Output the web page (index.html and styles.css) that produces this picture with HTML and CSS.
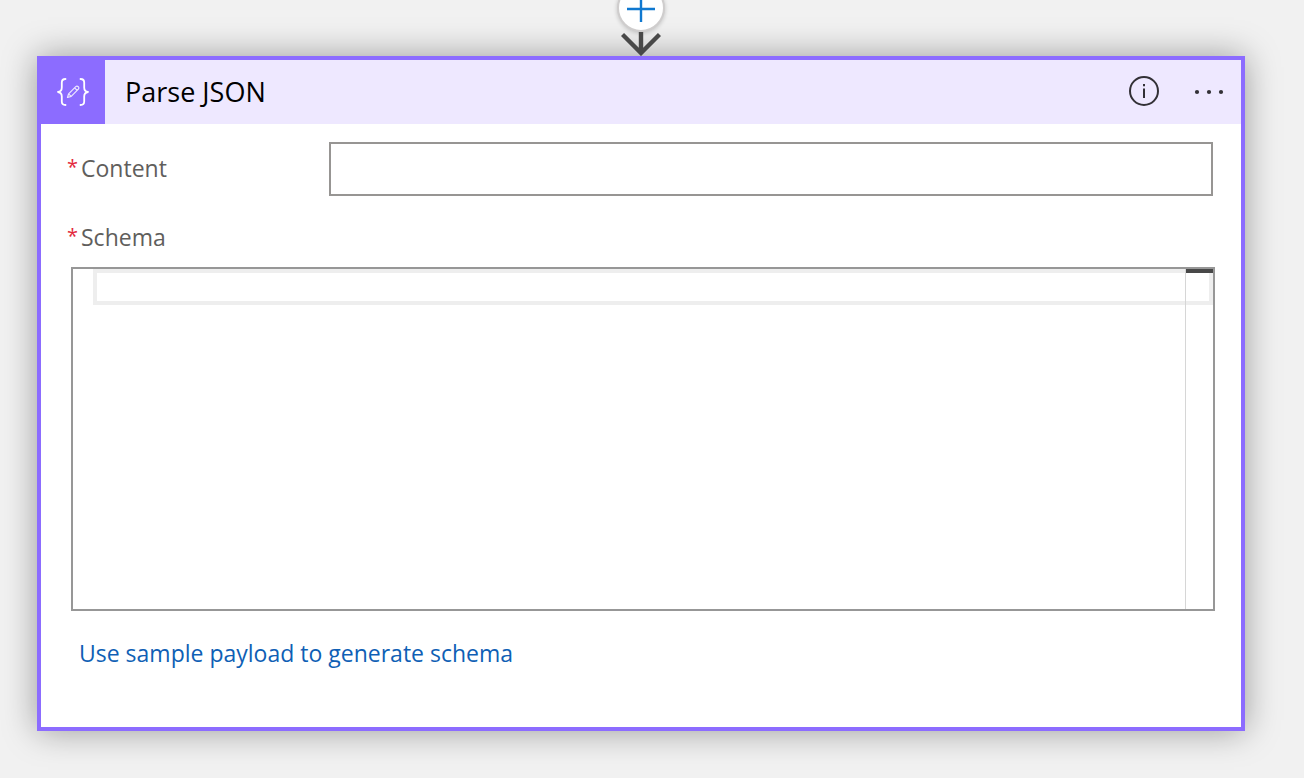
FILE: index.html
```html
<!DOCTYPE html>
<html lang="en">
<head>
<meta charset="utf-8">
<meta name="viewport" content="width=device-width, initial-scale=1">
<title>Parse JSON</title>
<link rel="stylesheet" href="styles.css">
</head>
<body>
<main class="canvas">
  <div class="connector">
    <button class="add-step" type="button" aria-label="Insert a new step">
      <svg width="28" height="28" viewBox="0 0 28 28" aria-hidden="true"><path d="M14 0v28M0 15h28" stroke="#0f78d0" stroke-width="2.4" fill="none"/></svg>
    </button>
    <svg class="arrow" width="40" height="24" viewBox="0 0 40 24" aria-hidden="true"><path d="M20 0v21M1.500 2.500L20 21L38.500 2.500" stroke="#484848" stroke-width="4.400" fill="none"/></svg>
  </div>

  <section class="card">
    <header class="card-header">
      <div class="card-icon">
        <svg width="34" height="30" viewBox="0 0 34 30" fill="none" stroke="#fff" stroke-linecap="round" stroke-linejoin="round" aria-hidden="true">
          <path stroke-width="1.8" d="M9.500 2Q5.800 2 5.800 5.500V10.500Q5.800 14.500 2 15Q5.800 15.500 5.800 19.500V24.500Q5.800 28 9.500 28M24.500 2Q28.200 2 28.200 5.500V10.500Q28.200 14.500 32 15Q28.200 15.500 28.200 19.500V24.500Q28.200 28 24.500 28"/>
          <path stroke-width="1.2" stroke="#eee8ff" d="M11.500 20.500L12.600 16.800L19.800 9.600Q21 8.500 22.300 9.700Q23.500 11 22.400 12.200L15.200 19.400ZM12.600 16.800L15.200 19.400M18.600 10.800L21.200 13.400"/>
        </svg>
      </div>
      <h1 class="card-title">Parse JSON</h1>
      <div class="card-actions">
        <button class="icon-button" type="button" aria-label="Information">
          <svg width="32" height="32" viewBox="0 0 32 32" aria-hidden="true"><circle cx="16" cy="15" r="14" fill="none" stroke="#323036" stroke-width="2"/><path d="M16 12.500V22M16 8v2.200" stroke="#323036" stroke-width="2"/></svg>
        </button>
        <button class="icon-button" type="button" aria-label="More commands">
          <svg width="32" height="32" viewBox="0 0 32 32" fill="#323036" aria-hidden="true"><circle cx="4" cy="16" r="2.100"/><circle cx="16" cy="16" r="2.100"/><circle cx="28" cy="16" r="2.100"/></svg>
        </button>
      </div>
    </header>

    <form class="card-body">
      <div class="field-row">
        <label class="label" for="content"><span class="required">*</span>Content</label>
        <input class="text-input" id="content" type="text" required>
      </div>
      <label class="label schema-label" for="schema"><span class="required">*</span>Schema</label>
      <div class="editor">
        <div class="current-line"></div>
        <div class="ruler"></div>
        <textarea class="editor-input" id="schema" required></textarea>
      </div>
      <a class="sample-link" href="#sample">Use sample payload to generate schema</a>
    </form>
  </section>
</main>
</body>
</html>
```
FILE: styles.css
```css
* {
  box-sizing: border-box;
}

body {
  margin: 0;
  background: #f1f1f1;
  font-family: "Segoe UI", "Open Sans", "Noto Sans", sans-serif;
  overflow-x: hidden;
}

button {
  border: 0;
  padding: 0;
  background: none;
  cursor: pointer;
}

svg {
  display: block;
}

.canvas {
  padding: 0 59px 47px 37px;
  overflow: hidden;
}

.connector {
  position: relative;
  z-index: 1;
  display: flex;
  flex-direction: column;
  align-items: center;
  margin-top: -16px;
}

.add-step {
  display: flex;
  align-items: center;
  justify-content: center;
  width: 48px;
  height: 48px;
  border: 2px solid #cfcdcd;
  border-radius: 50%;
  background: #fff;
  box-shadow: 0 1px 4px rgba(0, 0, 0, 0.2);
}

.card {
  border: 4px solid #8c6cff;
  background: #fff;
  box-shadow: 0 0 32px rgba(0, 0, 0, 0.36);
}

.card-header {
  display: flex;
  align-items: center;
  height: 64px;
  padding-right: 16px;
  background: #eee8ff;
}

.card-icon {
  display: flex;
  align-items: center;
  justify-content: center;
  width: 64px;
  height: 64px;
  background: #8c6cff;
}

.card-title {
  flex: 1;
  margin: 0 0 0 20px;
  color: #000;
  font-size: 27px;
  font-weight: 400;
  line-height: 36px;
}

.card-actions {
  display: flex;
  gap: 33px;
}

.card-body {
  padding: 18px 26px 58px;
}

.field-row {
  display: flex;
  align-items: center;
  padding-right: 2px;
}

.label {
  display: flex;
  width: 262px;
  padding-bottom: 2px;
  color: #605e5c;
  font-size: 23px;
  line-height: 32px;
}

.required {
  width: 14px;
  color: #e3283c;
  font-size: 20px;
  line-height: 30px;
}

.text-input {
  flex: 1;
  min-width: 0;
  height: 54px;
  padding: 0 12px;
  border: 2px solid #979593;
  border-radius: 0;
  background: #fff;
  font: inherit;
  font-size: 23px;
  outline: 0;
}

.schema-label {
  margin: 25px 0 12px;
}

.editor {
  position: relative;
  height: 344px;
  margin-left: 4px;
  border: 2px solid #979797;
}

.current-line {
  position: absolute;
  top: 0;
  right: 0;
  left: 20px;
  height: 36px;
  border: 4px solid #eee;
}

.ruler {
  position: absolute;
  top: 0;
  right: 0;
  bottom: 0;
  width: 28px;
  border-left: 1px solid #d6d6d6;
}

.ruler::before {
  content: "";
  display: block;
  height: 4px;
  background: #484848;
}

.editor-input {
  position: relative;
  display: block;
  width: 100%;
  height: 100%;
  padding: 4px 32px 4px 24px;
  border: 0;
  background: transparent;
  font-family: "Liberation Mono", monospace;
  font-size: 23px;
  line-height: 28px;
  outline: 0;
  resize: none;
}

.sample-link {
  display: inline-block;
  margin: 26px 0 0 12px;
  color: #0f5fb5;
  font-size: 23px;
  line-height: 32px;
  text-decoration: none;
}
```
